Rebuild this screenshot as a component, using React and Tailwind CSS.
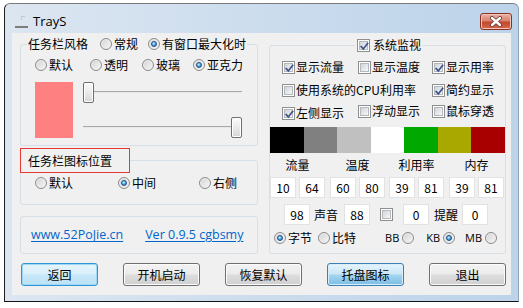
import React from "react";

function Radio({ checked, label, className = "" }) {
  return (
    <div className={"flex items-center gap-[2px] h-[14px] shrink-0 " + className}>
      <span className="w-[12px] h-[12px] rounded-full border border-[#8a8a8a] bg-[linear-gradient(135deg,#d2d2d2,#f8f8f8)] shadow-[inset_0_0_0_1px_#efefef] flex items-center justify-center shrink-0">
        {checked && (
          <span className="w-[6px] h-[6px] rounded-full border border-[#1e4f86] bg-[radial-gradient(circle_at_40%_35%,#c6f0ff,#4aa3e6_55%,#1d5aa0)]" />
        )}
      </span>
      {label && <span className="whitespace-nowrap">{label}</span>}
    </div>
  );
}

function Box({ checked }) {
  return (
    <span className="w-[13px] h-[13px] border border-[#8e8f8f] bg-white p-[1px] shrink-0 flex">
      <span className="relative w-full h-full border border-[#b4b8be] bg-[linear-gradient(135deg,#d0d4d9,#f7f7f7)] flex items-center justify-center">
        {checked && (
          <svg width="11" height="11" viewBox="0 0 11 11" className="absolute -left-[1px] -top-[1px]">
            <path d="M2.2 5.6 L4.3 7.9 L8.6 2.4" fill="none" stroke="#3d5389" strokeWidth="1.7" strokeLinecap="square" />
          </svg>
        )}
      </span>
    </span>
  );
}

function Check({ checked, label, className = "" }) {
  return (
    <div className={"flex items-center gap-[1px] h-[14px] " + className}>
      <Box checked={checked} />
      <span className="whitespace-nowrap">{label}</span>
    </div>
  );
}

function Field({ value, className = "" }) {
  return (
    <div className={"w-[26px] h-[21px] bg-white border border-[#e2e2e2] flex items-center justify-center shrink-0 " + className}>
      {value}
    </div>
  );
}

function Btn({ children, variant }) {
  const base = "w-[77px] h-[23px] rounded-[3px] border flex items-center justify-center";
  if (variant === "default")
    return (
      <div className={base + " border-[#2f95d6] bg-[linear-gradient(#e6f5fd,#d8effb_48%,#c6e7f8_52%,#bde2f6)] shadow-[inset_0_0_0_1px_#9fd8f6]"}>
        {children}
      </div>
    );
  if (variant === "hot")
    return (
      <div className={base + " border-[#3c7fb1] bg-[linear-gradient(#e5f4fc,#c9e7f7_48%,#a4d5f0_52%,#7dbde3)] shadow-[inset_0_0_0_1px_#d8eefa]"}>
        {children}
      </div>
    );
  return (
    <div className={base + " border-[#707070] bg-[linear-gradient(#f3f3f3,#ebebeb_48%,#dddddd_52%,#d0d0d0)] shadow-[inset_0_0_0_1px_#fbfbfb]"}>
      {children}
    </div>
  );
}

function Slider({ right }) {
  return (
    <div
      className={
        "h-[21px] w-full flex bg-[linear-gradient(to_bottom,transparent_9px,#a9a9a9_9px,#a9a9a9_10px,#e9e9e9_10px,#e9e9e9_11px,transparent_11px)] " +
        (right ? "justify-end" : "justify-start")
      }
    >
      <div className="w-[11px] h-[21px] rounded-[2px] border border-[#6f6f6f] bg-[linear-gradient(#fbfbfb,#ececec_45%,#d6d6d6)] shadow-[inset_0_0_0_1px_#ffffff]" />
    </div>
  );
}

const latin = "font-['Open_Sans',sans-serif]";

export default function App() {
  const swatches = ["#000000", "#808080", "#c0c0c0", "#ffffff", "#00a800", "#a8a800", "#a80000"];
  const pairs = [
    ["流量", "10", "64", ""],
    ["温度", "60", "80", "ml-[5px]"],
    ["利用率", "39", "81", "ml-[4px]"],
    ["内存", "39", "81", "ml-[5px]"],
  ];
  return (
    <div className="w-[523px] h-[308px] bg-white pt-[3px] pl-[4px] font-['Noto_Sans_CJK_SC',sans-serif] text-[12px] leading-[14px] text-black">
      <div className="w-[515px] h-[299px] rounded-t-[6px] border border-t-[#7a7a7a] border-l-[#1e1e1e] border-b-[#141414] border-r-[#8fa3ba] bg-[linear-gradient(to_right,#dce6f1,#bcd3ea)] flex flex-col">
        {/* title bar */}
        <div className="h-[29px] flex items-start shrink-0">
          <svg width="14" height="15" viewBox="0 0 14 15" className="ml-[10px] mt-[10px] shrink-0">
            <path d="M6 2 L10 2 L10 3 L7 3 L7 6 L6 6 Z" fill="#c9c9c9" />
            <rect x="0" y="12" width="13" height="2" fill="#7d7d7d" />
          </svg>
          <span className={"ml-[4px] mt-[9px] text-[13px] leading-[16px] " + latin}>TrayS</span>
          <div className="flex-1" />
          <div className="mt-[9px] mr-[6px] w-[32px] h-[17px] rounded-[3px] border border-[#8a3022] bg-[linear-gradient(#eab0a2,#d9826f_45%,#c4472d_55%,#d46a4e)] shadow-[inset_0_0_0_1px_#f2c5b8] flex items-center justify-center">
            <svg width="14" height="11" viewBox="0 0 14 11">
              <path d="M3 2 L11 9 M11 2 L3 9" stroke="#6b3a33" strokeWidth="4" strokeLinecap="round" />
              <path d="M3 2 L11 9 M11 2 L3 9" stroke="#ffffff" strokeWidth="2.4" strokeLinecap="round" />
            </svg>
          </div>
        </div>

        {/* client */}
        <div className="ml-[7px] w-[499px] h-[262px] bg-[#f0f0f0] flex flex-col pl-[8px] pr-[5px]">
          <div className="flex gap-[11px]">
            {/* left column */}
            <div className="w-[238px] flex flex-col">
              <div className="mt-[11px] border border-[#d5dfe5] rounded-[3px] pb-[7px] flex flex-col">
                <div className="-mt-[8px] ml-[6px] self-start bg-[#f0f0f0] px-[1px] h-[14px] flex items-center">
                  <span>任务栏风格</span>
                  <Radio label="常规" className="ml-[12px]" />
                  <Radio label="有窗口最大化时" checked className="ml-[10px]" />
                </div>
                <div className="mt-[7px] pl-[14px] flex h-[14px]">
                  <Radio label="默认" />
                  <Radio label="透明" className="ml-[17px]" />
                  <Radio label="玻璃" className="ml-[14px]" />
                  <Radio label="亚克力" checked className="ml-[13px]" />
                </div>
                <div className="mt-[10px] pl-[14px] flex">
                  <div className="w-[38px] h-[56px] bg-[#ff8080]" />
                  <div className="ml-[10px] w-[159px] flex flex-col gap-[14px]">
                    <Slider />
                    <Slider right />
                  </div>
                </div>
              </div>

              <div className="mt-[14px] border border-[#d5dfe5] rounded-[3px] pb-[14px] flex flex-col">
                <div className="-mt-[13px] -ml-[1px] w-[110px] h-[25px] border border-[#e53935] bg-[#f0f0f0] pl-[7px] flex items-center">
                  任务栏图标位置
                </div>
                <div className="mt-[3px] pl-[14px] flex h-[14px]">
                  <Radio label="默认" />
                  <Radio label="中间" checked className="ml-[45px]" />
                  <Radio label="右侧" className="ml-[43px]" />
                </div>
              </div>

              <div className={"mt-[11px] border border-[#d5dfe5] rounded-[3px] h-[38px] flex items-center pl-[10px] text-[12.5px] text-[#0066cc] " + latin}>
                <span className="underline underline-offset-2">www.52PoJie.cn</span>
                <span className="underline underline-offset-2 ml-[22px]">Ver 0.9.5 cgbsmy</span>
              </div>
            </div>

            {/* right column */}
            <div className="w-[237px] flex flex-col">
              <div className="mt-[12px] border border-[#d5dfe5] rounded-[3px] pb-[8px] flex flex-col">
                <div className="-mt-[8px] ml-[85px] self-start bg-[#f0f0f0] px-[2px] h-[14px] flex items-center gap-[3px]">
                  <Box checked />
                  <span>系统监视</span>
                </div>
                <div className="mt-[8px] pl-[12px] grid grid-cols-[76px_74px_1fr] h-[14px]">
                  <Check checked label="显示流量" />
                  <Check label="显示温度" />
                  <Check checked label="显示用率" />
                </div>
                <div className="mt-[9px] pl-[12px] grid grid-cols-[76px_74px_1fr] h-[14px]">
                  <Check label="使用系统的CPU利用率" className="col-span-2" />
                  <Check checked label="简约显示" />
                </div>
                <div className="mt-[7px] pl-[12px] grid grid-cols-[76px_74px_1fr] h-[14px] items-start">
                  <Check checked label="左侧显示" className="mt-[2px]" />
                  <Check label="浮动显示" />
                  <Check label="鼠标穿透" />
                </div>
                <div className="mt-[9px] h-[26px] flex">
                  {swatches.map((c) => (
                    <div key={c} className="flex-1" style={{ backgroundColor: c }} />
                  ))}
                </div>
                <div className="mt-[5px] flex">
                  {pairs.map(([l, a, b, m]) => (
                    <div key={l} className={"w-[55px] flex flex-col items-center " + m}>
                      <div className="h-[14px]">{l}</div>
                      <div className="mt-[5px] flex gap-[3px]">
                        <Field value={a} />
                        <Field value={b} />
                      </div>
                    </div>
                  ))}
                </div>
                <div className="mt-[6px] h-[21px] flex items-center">
                  <Field value="98" className="ml-[14px]" />
                  <span className="ml-[4px]">声音</span>
                  <Field value="88" className="ml-[6px]" />
                  <span className="ml-[10px] flex"><Box /></span>
                  <Field value="0" className="ml-[10px]" />
                  <span className="ml-[5px]">提醒</span>
                  <Field value="0" className="ml-[4px]" />
                </div>
                <div className="mt-[6px] h-[14px] flex items-center pl-[4px]">
                  <Radio label="字节" checked />
                  <Radio label="比特" className="ml-[6px]" />
                  <span className={"ml-[29px] text-[11px] " + latin}>BB</span>
                  <Radio className="ml-[3px]" />
                  <span className={"ml-[12px] text-[11px] " + latin}>KB</span>
                  <Radio checked className="ml-[3px]" />
                  <span className={"ml-[10px] text-[11px] " + latin}>MB</span>
                  <Radio className="ml-[3px]" />
                </div>
              </div>
            </div>
          </div>

          <div className="mt-[9px] pl-[1px] flex justify-between">
            <Btn variant="default">返回</Btn>
            <Btn>开机启动</Btn>
            <Btn>恢复默认</Btn>
            <Btn variant="hot">托盘图标</Btn>
            <Btn>退出</Btn>
          </div>
        </div>
      </div>
    </div>
  );
}
